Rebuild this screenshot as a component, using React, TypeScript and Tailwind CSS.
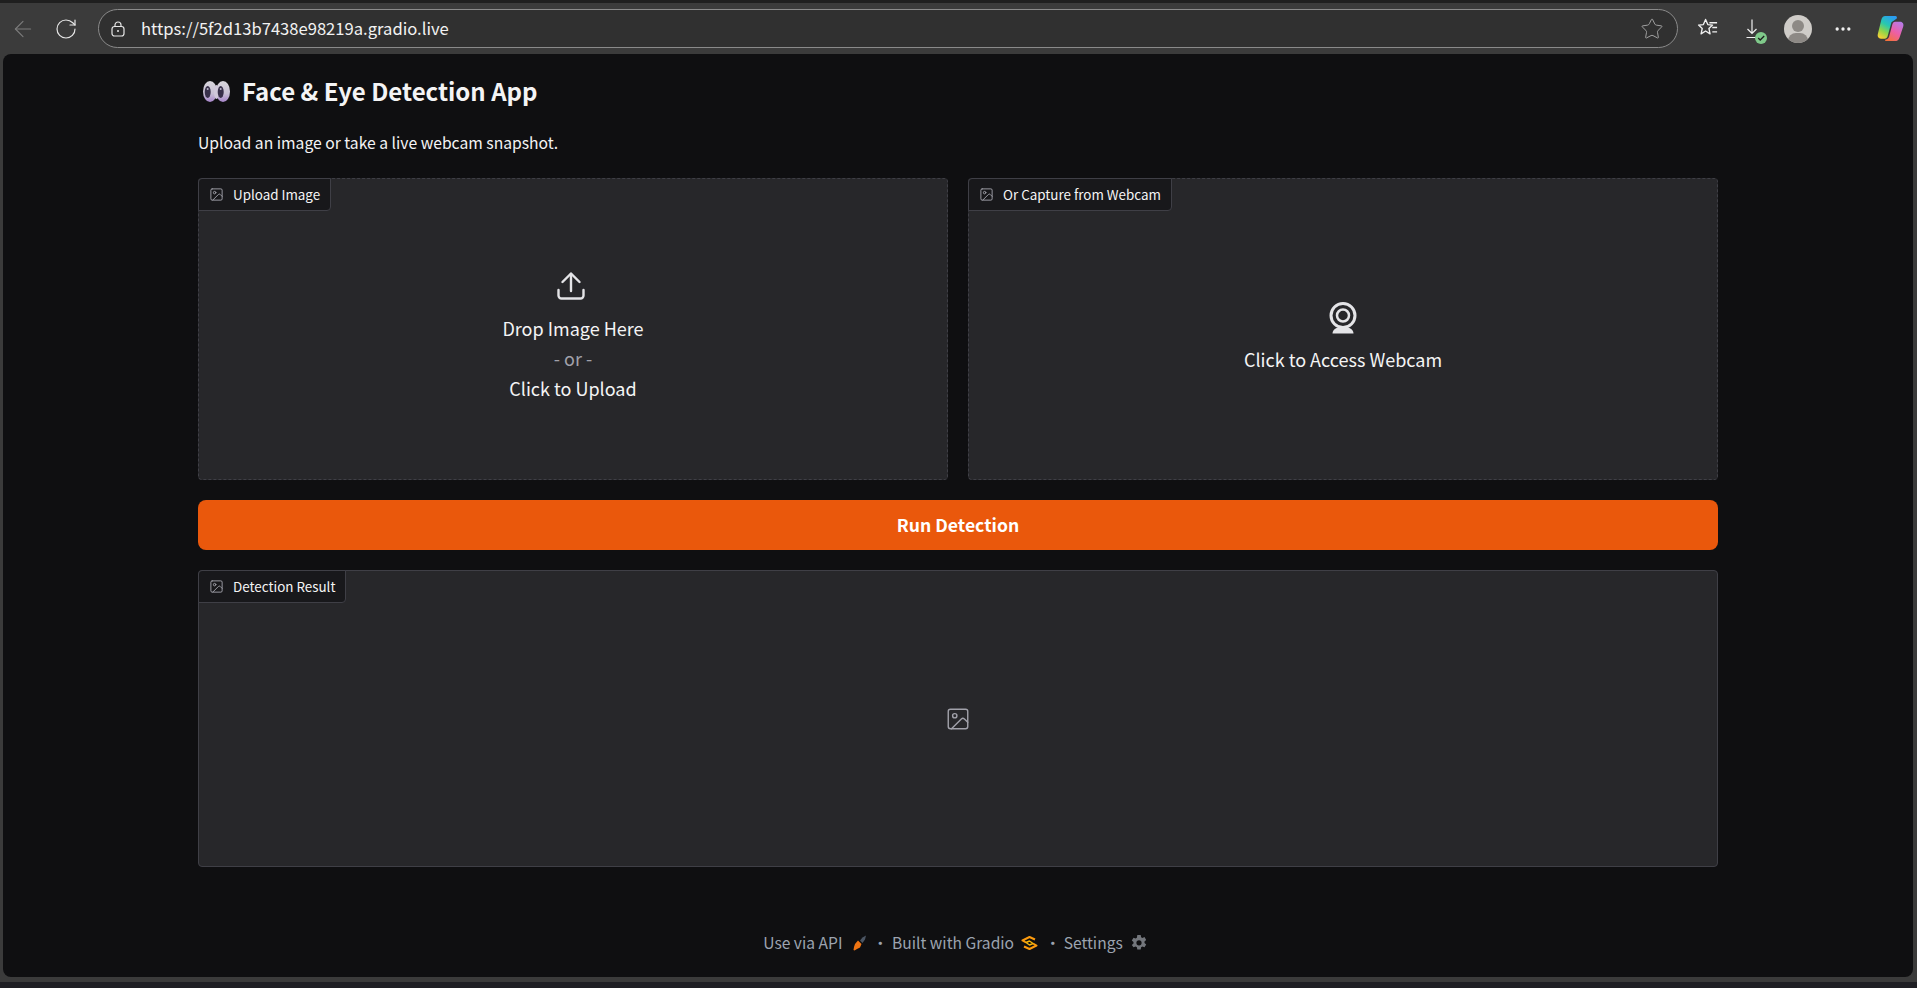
import { ArrowLeft, Ellipsis, Image, RotateCw, Star } from "lucide-react";

const UI_FONT = "font-['Noto_Sans_CJK_SC','Noto_Sans',sans-serif]";

function BlockLabel({ label }: { label: string }) {
  return (
    <div className="absolute -left-px -top-px flex h-[33px] items-center gap-[9px] rounded-br-[4px] rounded-tl-[4px] border border-[#3f3f46] bg-[#18181b] pl-[10px] pr-[10px] text-[13.400px] leading-none text-[#f4f4f5]">
      <Image className="h-[15px] w-[15px] text-[#a1a1aa]" strokeWidth={1.5} />
      <span>{label}</span>
    </div>
  );
}

function UploadIcon() {
  return (
    <svg viewBox="0 0 28 28" className="h-[28px] w-[28px]" fill="none" stroke="#e4e4e7" strokeWidth="2.400" strokeLinecap="round" strokeLinejoin="round">
      <path d="M14 19V2" />
      <path d="M5.500 10L14 1.500l8.500 8.500" />
      <path d="M1.500 18v5.500a3 3 0 0 0 3 3h19a3 3 0 0 0 3-3V18" />
    </svg>
  );
}

function WebcamIcon() {
  return (
    <svg viewBox="0 0 30 32" className="h-[32px] w-[30px]" fill="none">
      <circle cx="15" cy="13.500" r="12" stroke="#e4e4e7" strokeWidth="3" />
      <circle cx="15" cy="13.500" r="6" stroke="#e4e4e7" strokeWidth="2.500" />
      <path d="M4.500 31.500c0-3 2.500-5.500 5-5.500h11c2.500 0 5 2.500 5 5.500z" fill="#e4e4e7" />
    </svg>
  );
}

function EyesEmoji() {
  return (
    <svg viewBox="0 0 27 21" className="h-[21px] w-[27px]">
      <defs>
        <linearGradient id="eyeWhite" x1="0" y1="0" x2="0" y2="1">
          <stop offset="0" stopColor="#d8d6dc" />
          <stop offset="0.6" stopColor="#c8c0d4" />
          <stop offset="1" stopColor="#a684ca" />
        </linearGradient>
      </defs>
      <ellipse cx="7" cy="10.500" rx="7" ry="10.500" fill="url(#eyeWhite)" />
      <ellipse cx="20" cy="10.500" rx="7" ry="10.500" fill="url(#eyeWhite)" />
      <ellipse cx="13.500" cy="11" rx="2.500" ry="7" fill="#d0c8da" />
      <ellipse cx="4.700" cy="11" rx="3" ry="6" fill="#38304a" />
      <ellipse cx="17.700" cy="11" rx="3" ry="6" fill="#38304a" />
      <circle cx="4.700" cy="8" r="1" fill="#b9b3c8" />
      <circle cx="17.700" cy="8" r="1" fill="#b9b3c8" />
    </svg>
  );
}

function RocketIcon() {
  return (
    <svg viewBox="0 0 16 16" className="h-[16px] w-[16px]">
      <path d="M9 5.500l2.500-3 3.500-2-1 4-2.500 3.500z" fill="#4b5563" />
      <path d="M7 5.500l3.500 3.500-1.500 3.500-3 1.500-2.500 1.500-1-.5.500-3 1-3z" fill="#f07412" />
    </svg>
  );
}

function GradioLogo() {
  return (
    <svg viewBox="0 0 17 14" className="h-[14px] w-[17px]" fill="none" stroke="#fb9a0e" strokeWidth="2" strokeLinejoin="round">
      <path d="M14 3.500L8.500 1 1.500 4.500l3.500 2" />
      <path d="M3 10.500L8.500 13l7-3.500-3.500-2" />
      <path d="M5 6.500L8.500 5 12 7.500 8.500 9z" stroke="#f5b50c" strokeWidth="1.400" />
    </svg>
  );
}

function GearIcon() {
  return (
    <svg viewBox="0 0 16 16" className="h-[16px] w-[16px]">
      <path
        fillRule="evenodd"
        fill="#73767c"
        d="M6.300 0h3.400l.4 2.200 1.300.7 2.100-.8 1.700 2.900-1.700 1.400v1.500l1.700 1.500-1.700 2.900-2.100-.8-1.300.7-.4 2.200H6.300l-.4-2.200-1.300-.7-2.100.8L.8 10l1.700-1.500V7L.8 5.600l1.700-2.900 2.100.8 1.300-.7zM8 5.200a2.600 2.600 0 1 0 0 5.200 2.600 2.600 0 0 0 0-5.200z"
      />
    </svg>
  );
}

function CopilotIcon() {
  return (
    <svg viewBox="0 0 28 28" className="h-[27px] w-[27px]">
      <defs>
        <linearGradient id="copA" x1="0.700" y1="0" x2="0.200" y2="1">
          <stop offset="0" stopColor="#2b9cf2" />
          <stop offset="0.4" stopColor="#27c8b0" />
          <stop offset="0.7" stopColor="#8ed44a" />
          <stop offset="1" stopColor="#f7cf34" />
        </linearGradient>
        <linearGradient id="copB" x1="0.800" y1="0" x2="0.200" y2="1">
          <stop offset="0" stopColor="#b67be8" />
          <stop offset="0.5" stopColor="#ec5fa8" />
          <stop offset="1" stopColor="#f5713a" />
        </linearGradient>
      </defs>
      <path d="M8.500 1H19c1.500 0 2 1 1.500 2.500L15 7.500 11 22c-.5 1.500-1.500 2.500-3 2.500H4c-2.500 0-3.800-2-3.200-4.500L4.500 5C5 2.500 6.500 1 8.500 1z" fill="url(#copA)" />
      <path d="M19 7h5c2.800 0 4 2.500 3.200 5L23.500 23c-.8 2.800-2.500 4-5 4H9.500c-1.500 0-1.500-1-.5-1.500 2-.5 3-1.500 3.500-3l3-11C16 8.500 17 7 19 7z" fill="url(#copB)" />
    </svg>
  );
}

function BrowserBar() {
  return (
    <div className="flex h-[51px] shrink-0 items-center bg-[#3b3b3b]">
      <ArrowLeft className="ml-[10px] h-[26px] w-[26px] text-[#7c7c7c]" strokeWidth={1} />
      <RotateCw className="ml-[18px] h-[24px] w-[24px] text-[#e6e6e6]" strokeWidth={1.2} />
      <div className="ml-[20px] flex h-[39px] w-[1580px] items-center rounded-full border border-[#8a8a8a] bg-[#303030] pl-[12px] pr-[13px]">
        <svg viewBox="0 0 14 16" className="h-[16px] w-[14px]" fill="none" stroke="#e6e6e6" strokeWidth="1.200">
          <rect x="1" y="5.500" width="12" height="9.500" rx="2.500" />
          <path d="M4 5.500V4a3 3 0 0 1 6 0v1.500" />
          <circle cx="7" cy="10" r="1" fill="#e6e6e6" stroke="none" />
        </svg>
        <span className="ml-[16px] text-[16.600px] leading-none text-[#f2f2f2]">https://5f2d13b7438e98219a.gradio.live</span>
        <Star className="ml-auto h-[24px] w-[24px] text-[#a0a0a0]" strokeWidth={1} />
      </div>
      <svg viewBox="0 0 24 24" className="ml-[18px] h-[23px] w-[23px]" fill="none" stroke="#f0f0f0" strokeWidth="1.400" strokeLinejoin="round">
        <path d="M10 2.500l2.300 5.400 5 .5-3.800 3.600 1.200 5.600-4.700-3-4.700 3 1.200-5.600-3.800-3.600 5-.5z" />
        <path d="M14 6h8M17 11h5M17 15.500h5" />
      </svg>
      <div className="relative ml-[27px] h-[20px] w-[12px]">
        <svg viewBox="0 0 12 20" className="h-[20px] w-[12px]" fill="none" stroke="#f0f0f0" strokeWidth="1.200">
          <path d="M6 .5v14M1.500 10L6 14.500l4.500-4.500M.5 18.500h11" />
        </svg>
        <div className="absolute bottom-[-5px] right-[-9px] flex h-[12px] w-[12px] items-center justify-center rounded-full bg-[#7fc98a]">
          <svg viewBox="0 0 10 10" className="h-[8px] w-[8px]" fill="none" stroke="#1e1e1e" strokeWidth="1.600">
            <path d="M1.500 5l2.500 2.500 5-5" />
          </svg>
        </div>
      </div>
      <div className="relative ml-[26px] h-[28px] w-[28px] overflow-hidden rounded-full bg-[#cfccc8]">
        <div className="absolute left-[8px] top-[5px] h-[12px] w-[12px] rounded-full bg-[#8d8985]" />
        <div className="absolute left-[4px] top-[18px] h-[16px] w-[20px] rounded-full bg-[#8d8985]" />
      </div>
      <Ellipsis className="ml-[21px] h-[20px] w-[20px] text-[#f0f0f0]" strokeWidth={2} />
      <div className="ml-[24px]">
        <CopilotIcon />
      </div>
    </div>
  );
}

export default function App() {
  return (
    <div className={`flex h-[988px] w-[1917px] flex-col overflow-hidden bg-[#3b3b3b] ${UI_FONT}`}>
      <div className="h-[3px] shrink-0 bg-[#1f1f1f]" />
      <BrowserBar />
      <main className="ml-[3px] mr-[4px] flex h-[923px] shrink-0 flex-col rounded-[8px] bg-[#0f0f11] pl-[195px] pr-[195px] text-white">
        <h1 className="mt-[21px] flex h-[32px] items-center gap-[12px] text-[24px] font-semibold leading-none text-[#f4f4f5]">
          <span className="ml-[5px] flex">
            <EyesEmoji />
          </span>
          Face &amp; Eye Detection App
        </h1>
        <p className="mt-[26px] h-[20px] text-[15.700px] leading-[20px] text-[#f4f4f5]">Upload an image or take a live webcam snapshot.</p>

        <div className="mt-[25px] flex gap-[20px]">
          <div className="relative flex h-[302px] flex-1 flex-col items-center justify-center rounded-[4px] border border-dashed border-[#3f3f46] bg-[#27272a] text-[18px] leading-[30px] text-[#f4f4f5]">
            <BlockLabel label="Upload Image" />
            <div className="mt-[16px] flex flex-col items-center">
              <span className="-ml-[4px] flex">
                <UploadIcon />
              </span>
              <span className="mt-[13px]">Drop Image Here</span>
              <span className="text-[#a1a1aa]">- or -</span>
              <span>Click to Upload</span>
            </div>
          </div>
          <div className="relative flex h-[302px] flex-1 flex-col items-center justify-center rounded-[4px] border border-dashed border-[#3f3f46] bg-[#27272a] text-[18px] leading-[30px] text-[#f4f4f5]">
            <BlockLabel label="Or Capture from Webcam" />
            <div className="mt-[17px] flex flex-col items-center">
              <WebcamIcon />
              <span className="mt-[10px]">Click to Access Webcam</span>
            </div>
          </div>
        </div>

        <button className="mt-[20px] h-[50px] w-full rounded-[8px] bg-[#ea580c] text-[17.600px] font-semibold text-white">Run Detection</button>

        <div className="relative mt-[20px] flex h-[297px] items-center justify-center rounded-[4px] border border-[#3f3f46] bg-[#27272a]">
          <BlockLabel label="Detection Result" />
          <Image className="h-[26px] w-[26px] text-[#a1a1aa]" strokeWidth={1.3} />
        </div>

        <footer className="mt-[68px] flex items-center justify-center pr-[6px] text-[15.600px] leading-none text-[#9ca3af]">
          <span>Use via API</span>
          <span className="ml-[9px] flex">
            <RocketIcon />
          </span>
          <span className="ml-[5px] mr-[4px]">·</span>
          <span>Built with Gradio</span>
          <span className="ml-[7px] flex">
            <GradioLogo />
          </span>
          <span className="ml-[7px] mr-[3px]">·</span>
          <span>Settings</span>
          <span className="ml-[8px] flex">
            <GearIcon />
          </span>
        </footer>
      </main>
      <div className="mt-[5px] h-[6px] shrink-0 bg-[#1f1f24]" />
    </div>
  );
}
